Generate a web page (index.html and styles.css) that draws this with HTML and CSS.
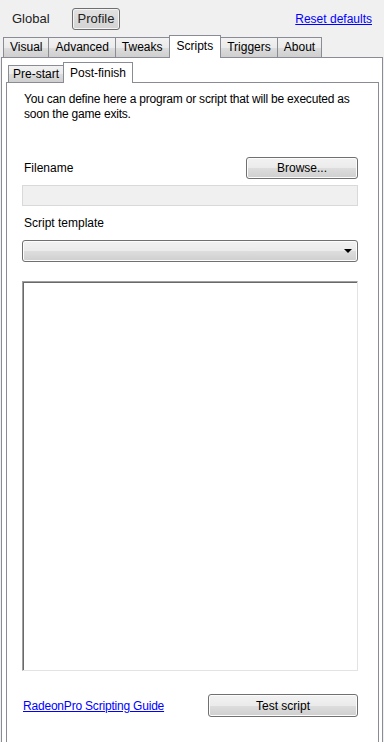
FILE: index.html
```html
<!DOCTYPE html>
<html>
<head>
  <title>RadeonPro - Scripts</title>
  <meta name="viewport" content="width=device-width, initial-scale=1.0">
  <link rel="stylesheet" href="styles.css">
</head>
<body>
  <div class="topbar">
    <div class="scope">
      <span class="scope-item">Global</span>
      <span class="scope-item active">Profile</span>
    </div>
    <a class="link" href="#">Reset defaults</a>
  </div>

  <div class="tabs main-tabs">
    <span class="tab">Visual</span>
    <span class="tab">Advanced</span>
    <span class="tab">Tweaks</span>
    <span class="tab active">Scripts</span>
    <span class="tab">Triggers</span>
    <span class="tab">About</span>
  </div>

  <div class="panel">
    <div class="tabs sub-tabs">
      <span class="tab">Pre-start</span>
      <span class="tab active">Post-finish</span>
    </div>
    <div class="subpanel">
      <p class="desc">You can define here a program or script that will be executed as soon the game exits.</p>

      <div class="row file-row">
        <span class="label">Filename</span>
        <button class="btn browse">Browse...</button>
      </div>
      <div class="input disabled"></div>

      <div class="label template-label">Script template</div>
      <div class="select">
        <span class="arrow"></span>
      </div>

      <textarea class="editor"></textarea>

      <div class="row footer">
        <a class="link" href="#">RadeonPro Scripting Guide</a>
        <button class="btn test">Test script</button>
      </div>
    </div>
  </div>
</body>
</html>
```

FILE: styles.css
```css
body {
  margin: 0;
  background: #f0f0f0;
  color: #000;
  font-family: 'Liberation Sans', Arial, sans-serif;
  font-size: 12px;
  height: 742px;
  overflow: hidden;
  display: flex;
  flex-direction: column;
}
.link {
  color: #0000ff;
  text-decoration: underline;
}

/* top bar */
.topbar {
  height: 35px;
  display: flex;
  align-items: center;
  justify-content: space-between;
  padding: 2px 12px 0 12px;
  box-sizing: border-box;
}
.scope {
  display: flex;
  align-items: center;
  gap: 22px;
}
.scope-item {
  font-size: 13px;
  color: #222;
}
.scope-item.active {
  padding: 2px 5px;
  border: 1px solid #6f6f6f;
  border-radius: 3px;
  background: linear-gradient(#e2e2e2, #d3d3d3);
  box-shadow: inset 0 0 0 1px #f4f4f4;
  line-height: 16px;
}
.topbar .link {
  font-size: 12px;
}

/* tabs */
.tabs {
  display: flex;
  align-items: flex-end;
}
.tab {
  height: 19px;
  line-height: 19px;
  padding: 0 6px;
  border: 1px solid #898c95;
  border-bottom: none;
  margin-right: -1px;
  background: linear-gradient(#f2f2f2 0%, #ebebeb 50%, #dddddd 51%, #cfcfcf 100%);
  white-space: nowrap;
}
.tab.active {
  height: 22px;
  line-height: 21px;
  padding: 0 7px;
  background: #fff;
  margin-bottom: -1px;
  position: relative;
  z-index: 1;
}
.main-tabs {
  height: 22px;
  padding-left: 3px;
}

/* outer tab page */
.panel {
  flex: 1;
  margin: 0 1px;
  border: 1px solid #898c95;
  border-bottom: none;
  background: #fff;
  padding: 2px 3px 0 4px;
  display: flex;
  flex-direction: column;
}
.sub-tabs {
  height: 22px;
  padding-left: 2px;
}
.sub-tabs .tab {
  height: 16px;
  line-height: 17px;
  padding: 0 4px;
}
.sub-tabs .tab.active {
  height: 20px;
  line-height: 20px;
  padding: 0 6px;
}

/* inner tab page */
.subpanel {
  flex: 1;
  border: 1px solid #898c95;
  border-bottom: none;
  background: #fff;
  padding: 9px 20px 0 15px;
  display: flex;
  flex-direction: column;
}
.desc {
  margin: 0 0 0 2px;
  line-height: 15px;
  letter-spacing: -0.2px;
}
.row {
  display: flex;
  align-items: center;
  justify-content: space-between;
}
.label {
  padding-left: 2px;
  line-height: 15px;
}
.file-row {
  margin-top: 35px;
}
.btn {
  font-family: inherit;
  font-size: 12px;
  color: #000;
  height: 22px;
  border: 1px solid #707070;
  border-radius: 3px;
  background: linear-gradient(#f2f2f2 0%, #ebebeb 50%, #dddddd 51%, #cfcfcf 100%);
  box-shadow: inset 0 0 0 1px #fcfcfc;
  padding: 0;
}
.browse {
  width: 112px;
}
.input {
  margin-top: 6px;
  height: 19px;
  border: 1px solid #d9d9d9;
  background: #f0f0f0;
}
.template-label {
  margin-top: 10px;
}
.select {
  margin-top: 9px;
  height: 20px;
  border: 1px solid #707070;
  border-radius: 3px;
  background: linear-gradient(#f2f2f2 0%, #ebebeb 50%, #dddddd 51%, #cfcfcf 100%);
  box-shadow: inset 0 0 0 1px #fcfcfc;
  display: flex;
  align-items: center;
  justify-content: flex-end;
  padding-right: 5px;
}
.arrow {
  width: 0;
  height: 0;
  border-left: 4px solid transparent;
  border-right: 4px solid transparent;
  border-top: 4px solid #000;
}
.editor {
  margin-top: 19px;
  height: 390px;
  box-sizing: border-box;
  resize: none;
  border: 1px solid;
  border-color: #a0a0a0 #e3e3e3 #e3e3e3 #a0a0a0;
  box-shadow: inset 1px 1px 0 #696969;
  background: #fff;
  outline: none;
}
.footer {
  margin-top: 23px;
}
.footer .btn {
  height: 23px;
}
.footer .link {
  padding-left: 1px;
  letter-spacing: -0.2px;
}
.test {
  width: 150px;
}
```
